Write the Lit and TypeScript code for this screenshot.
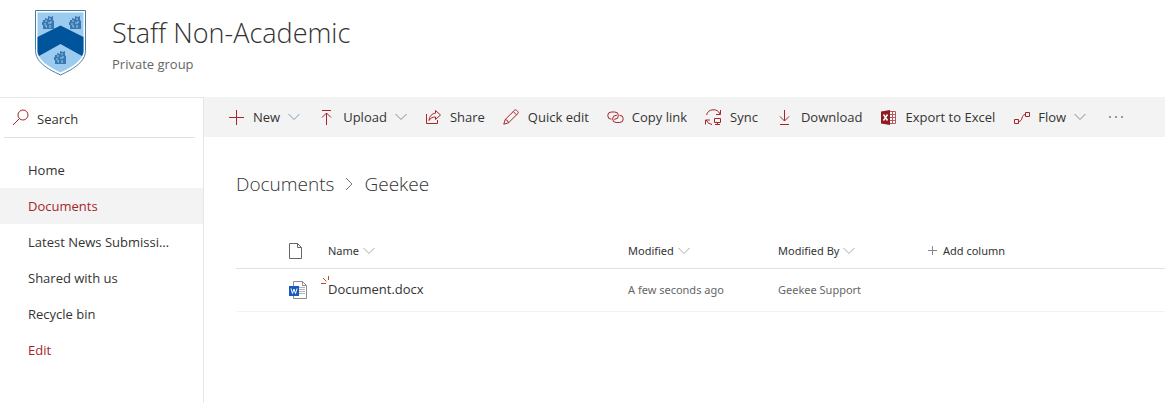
import { LitElement, html, css, svg, nothing } from "lit";
import { customElement } from "lit/decorators.js";

const glyphs = {
  search: svg`<circle cx="11" cy="6" r="5"/><path d="M7.500 9.500 1 16"/>`,
  add: svg`<path d="M8.500 1v15M1 8.500h15"/>`,
  upload: svg`<path d="M4 1.500h9M8.500 16V4M4 8.500l4.500-4.500 4.500 4.500"/>`,
  share: svg`<path d="M1.500 5v9.500h11V11"/><path d="M10.500 1.500 15.500 6l-5 4.500V8C7.500 8 5.500 9 4 11.500 4.500 7 7 4.500 10.500 4.200z"/>`,
  edit: svg`<path d="M.8 15.200 2.200 10.500 11.600 1.200q1-.8 2 .1l1.200 1.200q.9 1 .1 2L5.500 13.800zM10.300 2.600l3.200 3.200M2.200 10.500q2.800.3 3.300 3.300"/>`,
  link: svg`<path d="M4.500 10.200A3.600 3.600 0 0 1 4.200 3h3.600a3.600 3.600 0 0 1 0 7.200H7"/><path d="M12.500 6.300a3.600 3.600 0 0 1 .3 7.200H9.200a3.600 3.600 0 0 1 0-7.200H10"/>`,
  sync: svg`<path d="M1.500 6A7.200 7.200 0 0 1 15 5M15.500 1v4.500H11M7 15.500A7 7 0 0 1 1.200 11M.5 15.500V11H5M9.500 9.500h6v4h-6zM12.500 13.500v2.500M10 15.500h5"/>`,
  download: svg`<path d="M8.500 1v11M4 7.500 8.500 12 13 7.500M4 15.500h9"/>`,
  flow: svg`<path d="M1.500 10.500h4v4h-4zM12.500 3.500h4v4h-4zM5.500 12.500c5 0 2-7 7-7"/>`,
};
const icon = (name: keyof typeof glyphs) =>
  html`<svg class="icon" viewBox="0 0 17 17" aria-hidden="true">${glyphs[name]}</svg>`;

const chevron = html`<svg class="chevron" viewBox="0 0 12 8" aria-hidden="true"><path d="M.5 1 6 6.500 11.500 1"/></svg>`;

const excel = html`<svg class="excel" viewBox="0 0 17 17" aria-hidden="true">
  <path d="M9 2.500h6.500v12H9" fill="#fff" stroke="#b8585d"/>
  <path d="M9 5.500h6M9 8.500h6M9 11.500h6M12.500 3v11" stroke="#b8585d"/>
  <path d="M1 2.500 10 1v15l-9-1.500z" fill="#8e1c22"/>
  <path d="m3.500 5.500 4 6m0-6-4 6" stroke="#fff" stroke-width="1.500"/>
</svg>`;

const castle = (x: number, y: number) => svg`<g transform="translate(${x} ${y})">
  <path d="M1 4h2V2l3 1V0l3 1 2-1v4l1 1v8H1V9H0V6h1z" fill="#3a79b0"/>
  <path d="M3 5h2m2-2h2m-1 3h2M2 8h2m2-1h3M4 11h1m3-2v3m-5-2h2" stroke="#9ccbf0" fill="none"/>
</g>`;

const crest = html`<svg class="crest" viewBox="0 0 51 66" role="img" aria-label="School crest">
  <path d="M.5.500h50v40c0 11-11 18-25 24.500C11.500 58.500.5 51.500.5 40.500z" fill="#fff" stroke="#4a7c9b"/>
  <path d="M2.500 2.500h46v38c0 9-10 16-23 22-13-6-23-13-23-22z" fill="#9ccbf0"/>
  <path d="M2.500 27 25.500 15.500l23 11.500v14c0 2-.5 3.500-1.500 5L25.500 34 4 46c-1-1.500-1.500-3-1.500-5z" fill="#00549c"/>
  ${castle(7, 6)}${castle(34, 6)}${castle(19, 41)}
</svg>`;

const commands = [
  { label: "New", art: icon("add"), menu: true, cls: "new" },
  { label: "Upload", art: icon("upload"), menu: true },
  { label: "Share", art: icon("share") },
  { label: "Quick edit", art: icon("edit") },
  { label: "Copy link", art: icon("link") },
  { label: "Sync", art: icon("sync") },
  { label: "Download", art: icon("download") },
  { label: "Export to Excel", art: excel },
  { label: "Flow", art: icon("flow"), menu: true },
];

const navigation = ["Home", "Documents", "Latest News Submissions", "Shared with us", "Recycle bin"];

@customElement("app-root")
export class AppRoot extends LitElement {
  static styles = css`
    :host {
      display: flex;
      flex-direction: column;
      min-height: 100vh;
      background: #fff;
      color: #333;
      font: 13px/20px "Open Sans", "Noto Sans", sans-serif;
    }
    * { box-sizing: border-box; }
    button, input { font: inherit; color: inherit; border: 0; padding: 0; background: none; }
    a { color: inherit; text-decoration: none; }
    svg { flex: none; fill: none; }
    .header { display: flex; gap: 26px; padding: 10px 35px 21px; }
    .crest { width: 51px; height: 66px; }
    .title { margin: 5px 0; font-size: 27px; line-height: 36px; font-weight: 300; }
    .subtitle { margin: 0; color: #666; line-height: 16px; }
    .body { display: flex; flex: 1; }
    .side { flex: none; width: 204px; border: solid #e6e6e6; border-width: 1px 1px 0 0; }
    .search { display: flex; align-items: center; gap: 8px; height: 40px; margin: 0 8px 0 4px; padding-left: 8px; border-bottom: 1px solid #e1e1e1; }
    .search input { flex: 1; min-width: 0; outline: 0; padding-top: 2px; }
    .search input::placeholder { color: #333; opacity: 1; }
    .icon { width: 17px; height: 17px; stroke: #a4262c; }
    .nav { margin: 14px 0 0; padding: 0; list-style: none; }
    .nav a { display: block; padding: 8px 32px 8px 28px; overflow: hidden; white-space: nowrap; text-overflow: ellipsis; }
    .nav .current { background: #f3f3f3; color: #a4262c; }
    .nav .edit { color: #a4262c; }
    .main { flex: 1; min-width: 0; }
    .bar { display: flex; align-items: center; gap: 18px; height: 40px; padding-left: 24px; background: #f3f3f3; }
    .command { display: flex; align-items: center; gap: 8px; white-space: nowrap; }
    .chevron { width: 12px; height: 8px; stroke: #8a8a8a; }
    .new .chevron { stroke: #7d9bbd; }
    .excel { width: 17px; height: 17px; }
    .more { display: flex; margin-left: 4px; }
    .more svg { width: 16px; height: 4px; fill: #777; }
    .crumbs { display: flex; align-items: center; gap: 10px; padding: 33px 32px 36px; font-size: 19px; line-height: 28px; font-weight: 300; }
    .crumbs svg { width: 10px; height: 14px; stroke: #777; }
    .list { width: calc(100% - 32px); margin-left: 32px; border-collapse: collapse; table-layout: fixed; font-family: "Noto Sans", "Open Sans", sans-serif; font-size: 11px; text-align: left; }
    .list th, .list td { padding: 0; font-weight: 400; white-space: nowrap; }
    .list th { height: 34px; border-bottom: 1px solid #e1e1e1; }
    .list td { height: 43px; border-bottom: 1px solid #f3f3f3; color: #666; }
    .type { width: 92px; }
    .name { width: 300px; }
    .meta { width: 150px; }
    .type svg { display: block; margin-left: 53px; }
    .sort { display: flex; align-items: center; gap: 4px; }
    .sort .chevron { stroke: #aaa; }
    .plus { width: 11px; height: 10px; stroke: #888; }
    .file { position: relative; color: #333; font-family: "Open Sans", "Noto Sans", sans-serif; font-size: 13px; }
    .fresh { position: absolute; left: -7px; top: -4px; width: 9px; height: 9px; stroke: #c04a2b; }
  `;

  private sortable(label: string) {
    return html`<button class="sort">${label}${chevron}</button>`;
  }

  render() {
    return html`
      <header class="header">
        ${crest}
        <div>
          <h1 class="title">Staff Non-Academic</h1>
          <p class="subtitle">Private group</p>
        </div>
      </header>
      <div class="body">
        <aside class="side">
          <label class="search">${icon("search")}<input type="search" placeholder="Search" aria-label="Search" /></label>
          <nav>
            <ul class="nav">
              ${navigation.map((item) => html`<li><a href="#" class=${item === "Documents" ? "current" : nothing}>${item}</a></li>`)}
              <li><a href="#" class="edit">Edit</a></li>
            </ul>
          </nav>
        </aside>
        <main class="main">
          <div class="bar">
            ${commands.map((c) => html`<button class="command ${c.cls ?? ""}">${c.art}<span>${c.label}</span>${c.menu ? chevron : nothing}</button>`)}
            <button class="more" aria-label="More"><svg viewBox="0 0 16 4"><circle cx="2" cy="2" r="1"/><circle cx="8" cy="2" r="1"/><circle cx="14" cy="2" r="1"/></svg></button>
          </div>
          <nav class="crumbs">
            <a href="#">Documents</a>
            <svg viewBox="0 0 10 14" aria-hidden="true"><path d="m2 1 6 6-6 6"/></svg>
            <a href="#">Geekee</a>
          </nav>
          <table class="list">
            <thead>
              <tr>
                <th class="type"><svg width="14" height="16" viewBox="0 0 14 16" aria-label="Type"><path d="M.5.500h8l4 4v11H.500zM8.500.500v4h4" stroke="#666"/></svg></th>
                <th class="name">${this.sortable("Name")}</th>
                <th class="meta">${this.sortable("Modified")}</th>
                <th class="meta">${this.sortable("Modified By")}</th>
                <th><button class="sort"><svg class="plus" viewBox="0 0 11 10" aria-hidden="true"><path d="M4.500 0v9M0 4.500h9"/></svg>Add column</button></th>
              </tr>
            </thead>
            <tbody>
              <tr>
                <td class="type"><svg width="19" height="18" viewBox="0 0 19 18" aria-label="Word document">
                  <path d="M4.500.500h9l4 4v13h-13zM13.500.500v4h4" stroke="#8c8c8c" fill="#fff"/>
                  <path d="M10 6.500h6M10 8.500h6M10 10.500h6M10 12.500h6" stroke="#b5b5b5"/>
                  <path d="M0 5h10v10H0z" fill="#185abd"/>
                  <path d="m2 7.500 1.500 5L5 8l1.500 4.500L8 7.500" stroke="#fff"/>
                </svg></td>
                <td><a class="file" href="#"><svg class="fresh" viewBox="0 0 9 9" aria-hidden="true"><path d="M7.500 0v4M2 2l3.500 3.500M0 7.500h5"/></svg>Document.docx</a></td>
                <td>A few seconds ago</td>
                <td>Geekee Support</td>
                <td></td>
              </tr>
            </tbody>
          </table>
        </main>
      </div>
    `;
  }
}
